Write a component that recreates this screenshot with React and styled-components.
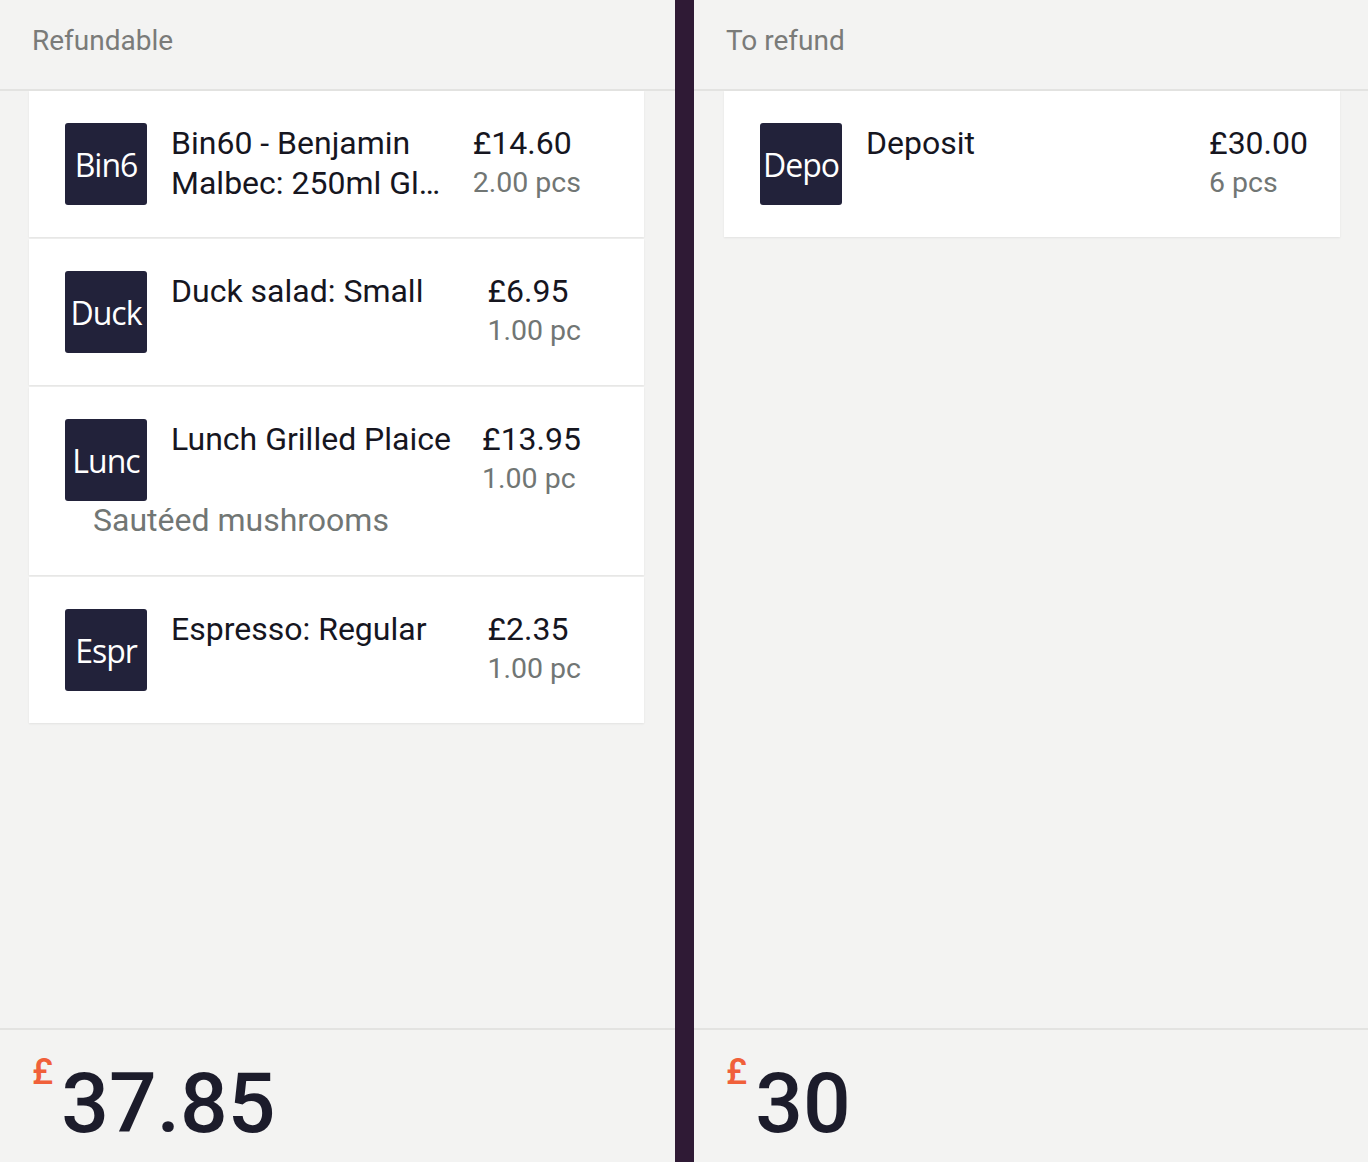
import styled, { createGlobalStyle } from 'styled-components';

const REFUNDABLE = [
  { id: 1, thumb: 'Bin6', name: 'Bin60 - Benjamin Malbec: 250ml Glass', price: '£14.60', qty: '2.00 pcs' },
  { id: 2, thumb: 'Duck', name: 'Duck salad: Small', price: '£6.95', qty: '1.00 pc' },
  { id: 3, thumb: 'Lunc', name: 'Lunch Grilled Plaice', price: '£13.95', qty: '1.00 pc', modifier: 'Sautéed mushrooms' },
  { id: 4, thumb: 'Espr', name: 'Espresso: Regular', price: '£2.35', qty: '1.00 pc' },
];

const TO_REFUND = [
  { id: 5, thumb: 'Depo', name: 'Deposit', price: '£30.00', qty: '6 pcs' },
];

function ItemCard({ item, trailing }) {
  return (
    <Card>
      <Row $trailing={trailing}>
        <Thumb>{item.thumb}</Thumb>
        <Name>{item.name}</Name>
        <PriceCol>
          <Price>{item.price}</Price>
          <Qty>{item.qty}</Qty>
        </PriceCol>
      </Row>
      {item.modifier && <Modifier>{item.modifier}</Modifier>}
    </Card>
  );
}

function Pane({ title, items, total, trailing, padL, padR }) {
  return (
    <PaneWrap>
      <PaneHeader>{title}</PaneHeader>
      <List $padL={padL} $padR={padR}>
        {items.map((item) => (
          <ItemCard key={item.id} item={item} trailing={trailing} />
        ))}
      </List>
      <Footer>
        <Currency>£</Currency>
        <Total>{total}</Total>
      </Footer>
    </PaneWrap>
  );
}

export default function App() {
  return (
    <>
      <GlobalStyle />
      <Screen>
        <Pane title="Refundable" items={REFUNDABLE} total="37.85" trailing={63} padL={29} padR={31} />
        <Divider />
        <Pane title="To refund" items={TO_REFUND} total="30" trailing={32} padL={30} padR={28} />
      </Screen>
    </>
  );
}

/* ========== Styled ========== */

const GlobalStyle = createGlobalStyle`
  html, body { margin: 0; padding: 0; background: #f3f3f2; }
  body { font-family: Roboto, "Liberation Sans", sans-serif; }
  * { box-sizing: border-box; }
`;

const Screen = styled.div`
  display: grid; grid-template-columns: 675px 19px 1fr;
  height: 1162px; background: #f3f3f2; overflow: hidden;
`;

const Divider = styled.div`
  background: #2f1a35;
`;

const PaneWrap = styled.div`
  display: flex; flex-direction: column; min-width: 0;
`;

const PaneHeader = styled.div`
  height: 91px; padding: 24px 32px 0;
  font-size: 28px; color: #7a7b79; font-weight: 400;
  border-bottom: 2px solid #e3e3e1;
`;

const List = styled.div`
  flex: 1; display: flex; flex-direction: column; gap: 2px;
  padding: 0 ${({ $padR }) => $padR}px 0 ${({ $padL }) => $padL}px;
`;

const Card = styled.div`
  background: #fff; padding: 32px 0 32px 36px;
  box-shadow: 0 1px 2px rgba(0, 0, 0, 0.07);
`;

const Row = styled.div`
  display: flex; align-items: flex-start; gap: 24px;
  padding-right: ${({ $trailing }) => $trailing}px;
`;

const Thumb = styled.div`
  width: 82px; height: 82px; flex-shrink: 0;
  display: flex; align-items: center; justify-content: center;
  background: #22223a; border-radius: 3px; overflow: hidden;
  color: #fff; font-family: "Open Sans", sans-serif; font-size: 32px;
  white-space: nowrap; letter-spacing: -1px;
`;

const Name = styled.div`
  flex: 1; min-width: 0; margin-right: 6px;
  font-size: 32px; line-height: 40px; color: #16161f; font-weight: 400;
  word-break: break-all;
  display: -webkit-box; -webkit-line-clamp: 2; -webkit-box-orient: vertical;
  overflow: hidden;
`;

const PriceCol = styled.div`
  flex: none; display: flex; flex-direction: column;
  white-space: nowrap;
`;

const Price = styled.div`
  font-size: 32px; line-height: 40px; color: #16161f; font-weight: 400;
`;

const Qty = styled.div`
  font-size: 28.5px; line-height: 40px; color: #717674;
`;

const Modifier = styled.div`
  margin-left: 28px; padding-bottom: 4px;
  font-size: 32px; line-height: 38px; color: #717674;
`;

const Footer = styled.div`
  height: 134px; border-top: 2px solid #e3e3e1;
  display: flex; align-items: flex-start; padding: 20px 0 0 32px;
`;

const Currency = styled.span`
  font-size: 36px; font-weight: 500; color: #f0603a; line-height: 1;
  margin-top: 4px;
`;

const Total = styled.span`
  font-size: 84px; font-weight: 500; color: #1c1c2b; line-height: 1;
  margin-left: 8px; margin-top: 12px;
`;
